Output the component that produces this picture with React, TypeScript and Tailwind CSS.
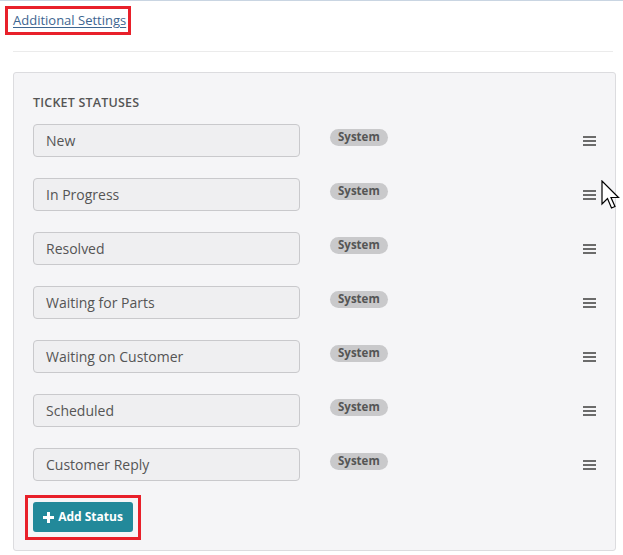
const statuses = [
  'New',
  'In Progress',
  'Resolved',
  'Waiting for Parts',
  'Waiting on Customer',
  'Scheduled',
  'Customer Reply',
]

function MenuIcon() {
  return (
    <svg width="13" height="11" viewBox="0 0 13 11" className="text-[#6b6b6b]">
      <rect x="0" y="1" width="13" height="2" fill="currentColor" />
      <rect x="0" y="5" width="13" height="2" fill="currentColor" />
      <rect x="0" y="9" width="13" height="2" fill="currentColor" />
    </svg>
  )
}

function Cursor() {
  return (
    <svg width="20" height="32" viewBox="0 0 20 32" className="absolute left-[601px] top-[179px]">
      <path
        d="M1 1 L1 24 L6.5 18.5 L10.5 28 L14 26.5 L10 17.5 L17.5 17.5 Z"
        fill="#fff"
        stroke="#000"
        strokeWidth="1.2"
        strokeLinejoin="miter"
      />
    </svg>
  )
}

export default function App() {
  return (
    <div
      className="relative w-[623px] h-[555px] bg-white border-t border-[#c9d5e2] overflow-hidden"
      style={{ fontFamily: '"Open Sans", "Liberation Sans", sans-serif' }}
    >
      <div className="pl-[5px] pt-[5px]">
        <div className="inline-flex items-center w-[126px] h-[29px] border-[3px] border-[#e8202a] pl-[5px]">
          <a href="#" className="text-[13px] leading-none text-[#3d6590] underline underline-offset-2">
            Additional Settings
          </a>
        </div>
      </div>

      <div className="mx-[13px] mt-[16px] mr-[10px] border-t border-[#ebebeb]" />

      <div className="ml-[13px] mr-[7px] mt-[20px] h-[479px] bg-[#f5f5f7] border border-[#dcdcdf] rounded-[3px] px-[19px] pt-[22px]">
        <h3 className="text-[12.5px] leading-[16px] font-semibold text-[#555] tracking-[0.2px]">TICKET STATUSES</h3>

        <div className="mt-[13px] flex flex-col gap-[21px]">
          {statuses.map((s) => (
            <div key={s} className="flex items-center">
              <div className="w-[267px] h-[33px] flex items-center bg-[#efeff1] border border-[#c9c9cc] rounded-[4px] pl-[12px] text-[14px] text-[#555]">
                {s}
              </div>
              <span className="ml-[30px] -mt-[7px] h-[17px] px-[8px] flex items-center rounded-full bg-[#c9c9cb] text-[11.5px] font-bold text-[#555]">
                System
              </span>
              <div className="ml-auto -mt-[1px]">
                <MenuIcon />
              </div>
            </div>
          ))}
        </div>

        <div className="mt-[14px] -ml-[8px] inline-block border-[3px] border-[#e8202a] px-[5px] pt-[4px] pb-[5px]">
          <button className="w-[100px] h-[30px] flex items-center justify-center gap-[4px] bg-[#22899a] rounded-[3px] text-white text-[12px] font-bold">
            <svg width="11" height="11" viewBox="0 0 11 11">
              <rect x="4" y="0" width="3" height="11" fill="#fff" />
              <rect x="0" y="4" width="11" height="3" fill="#fff" />
            </svg>
            Add Status
          </button>
        </div>
      </div>

      <Cursor />
    </div>
  )
}
